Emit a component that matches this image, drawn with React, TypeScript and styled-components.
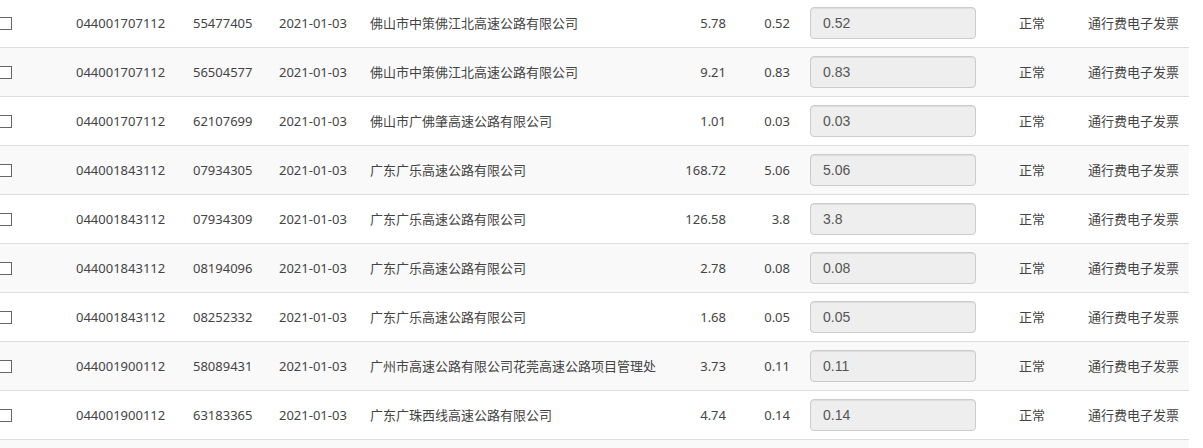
import React from "react";
import styled, { createGlobalStyle } from "styled-components";

const GlobalStyle = createGlobalStyle`
  html, body {
    margin: 0;
    padding: 0;
    background: #fff;
    overflow: hidden;
  }
  body {
    font-family: "Noto Sans", "Noto Sans CJK SC", sans-serif;
    font-size: 13px;
    color: #444;
  }
`;

const Wrapper = styled.div`
  margin: -2px 0 0 -9px;
  width: 1198px;
`;

const Table = styled.table`
  width: 1198px;
  border-collapse: collapse;
  border-spacing: 0;
  table-layout: fixed;
`;

const Row = styled.tr`
  &:nth-child(even) {
    background: #f9f9f9;
  }
`;

const Cell = styled.td<{ $align?: "left" | "right"; $padRight?: number }>`
  padding: 8px;
  padding-right: ${(p) => (p.$padRight ?? 8)}px;
  border-top: 1px solid #ddd;
  vertical-align: middle;
  text-align: ${(p) => p.$align ?? "left"};
  white-space: nowrap;
  line-height: 20px;
  height: 32px;
  font-family: "Noto Sans", "Noto Sans CJK SC", sans-serif;
  font-size: 13px;
  color: #444;
`;

const Check = styled.input.attrs({ type: "checkbox" })`
  appearance: none;
  -webkit-appearance: none;
  display: block;
  width: 13px;
  height: 13px;
  margin: 0;
  border: 1px solid #666;
  border-radius: 0;
  background: #fff;
  box-sizing: border-box;
`;

const AmountInput = styled.input`
  display: block;
  box-sizing: border-box;
  width: 166px;
  height: 32px;
  padding: 6px 12px;
  margin: 0;
  border: 1px solid #ccc;
  border-radius: 4px;
  background: #eee;
  box-shadow: inset 0 1px 1px rgba(0, 0, 0, 0.075);
  font-family: "Liberation Sans", Arial, sans-serif;
  font-size: 14px;
  color: #555;
  outline: none;
`;

type Item = {
  code: string;
  no: string;
  date: string;
  seller: string;
  total: string;
  tax: string;
};

const items: Item[] = [
  { code: "044001707112", no: "55477405", date: "2021-01-03", seller: "佛山市中策佛江北高速公路有限公司", total: "5.78", tax: "0.52" },
  { code: "044001707112", no: "56504577", date: "2021-01-03", seller: "佛山市中策佛江北高速公路有限公司", total: "9.21", tax: "0.83" },
  { code: "044001707112", no: "62107699", date: "2021-01-03", seller: "佛山市广佛肇高速公路有限公司", total: "1.01", tax: "0.03" },
  { code: "044001843112", no: "07934305", date: "2021-01-03", seller: "广东广乐高速公路有限公司", total: "168.72", tax: "5.06" },
  { code: "044001843112", no: "07934309", date: "2021-01-03", seller: "广东广乐高速公路有限公司", total: "126.58", tax: "3.8" },
  { code: "044001843112", no: "08194096", date: "2021-01-03", seller: "广东广乐高速公路有限公司", total: "2.78", tax: "0.08" },
  { code: "044001843112", no: "08252332", date: "2021-01-03", seller: "广东广乐高速公路有限公司", total: "1.68", tax: "0.05" },
  { code: "044001900112", no: "58089431", date: "2021-01-03", seller: "广州市高速公路有限公司花莞高速公路项目管理处", total: "3.73", tax: "0.11" },
  { code: "044001900112", no: "63183365", date: "2021-01-03", seller: "广东广珠西线高速公路有限公司", total: "4.74", tax: "0.14" },
];

const widths = [77, 117, 86, 91, 304, 68, 68, 209, 69, 109];

export default function App() {
  return (
    <>
      <GlobalStyle />
      <Wrapper>
        <Table>
          <colgroup>
            {widths.map((w, i) => (
              <col key={i} style={{ width: w }} />
            ))}
          </colgroup>
          <tbody>
            {items.map((it, i) => (
              <Row key={i}>
                <Cell>
                  <Check />
                </Cell>
                <Cell>{it.code}</Cell>
                <Cell>{it.no}</Cell>
                <Cell>{it.date}</Cell>
                <Cell>{it.seller}</Cell>
                <Cell $align="right">{it.total}</Cell>
                <Cell $align="right" $padRight={12}>{it.tax}</Cell>
                <Cell>
                  <AmountInput disabled defaultValue={it.tax} />
                </Cell>
                <Cell>正常</Cell>
                <Cell>通行费电子发票</Cell>
              </Row>
            ))}
            <Row>
              {widths.map((_, i) => (
                <Cell key={i} />
              ))}
            </Row>
          </tbody>
        </Table>
      </Wrapper>
    </>
  );
}
